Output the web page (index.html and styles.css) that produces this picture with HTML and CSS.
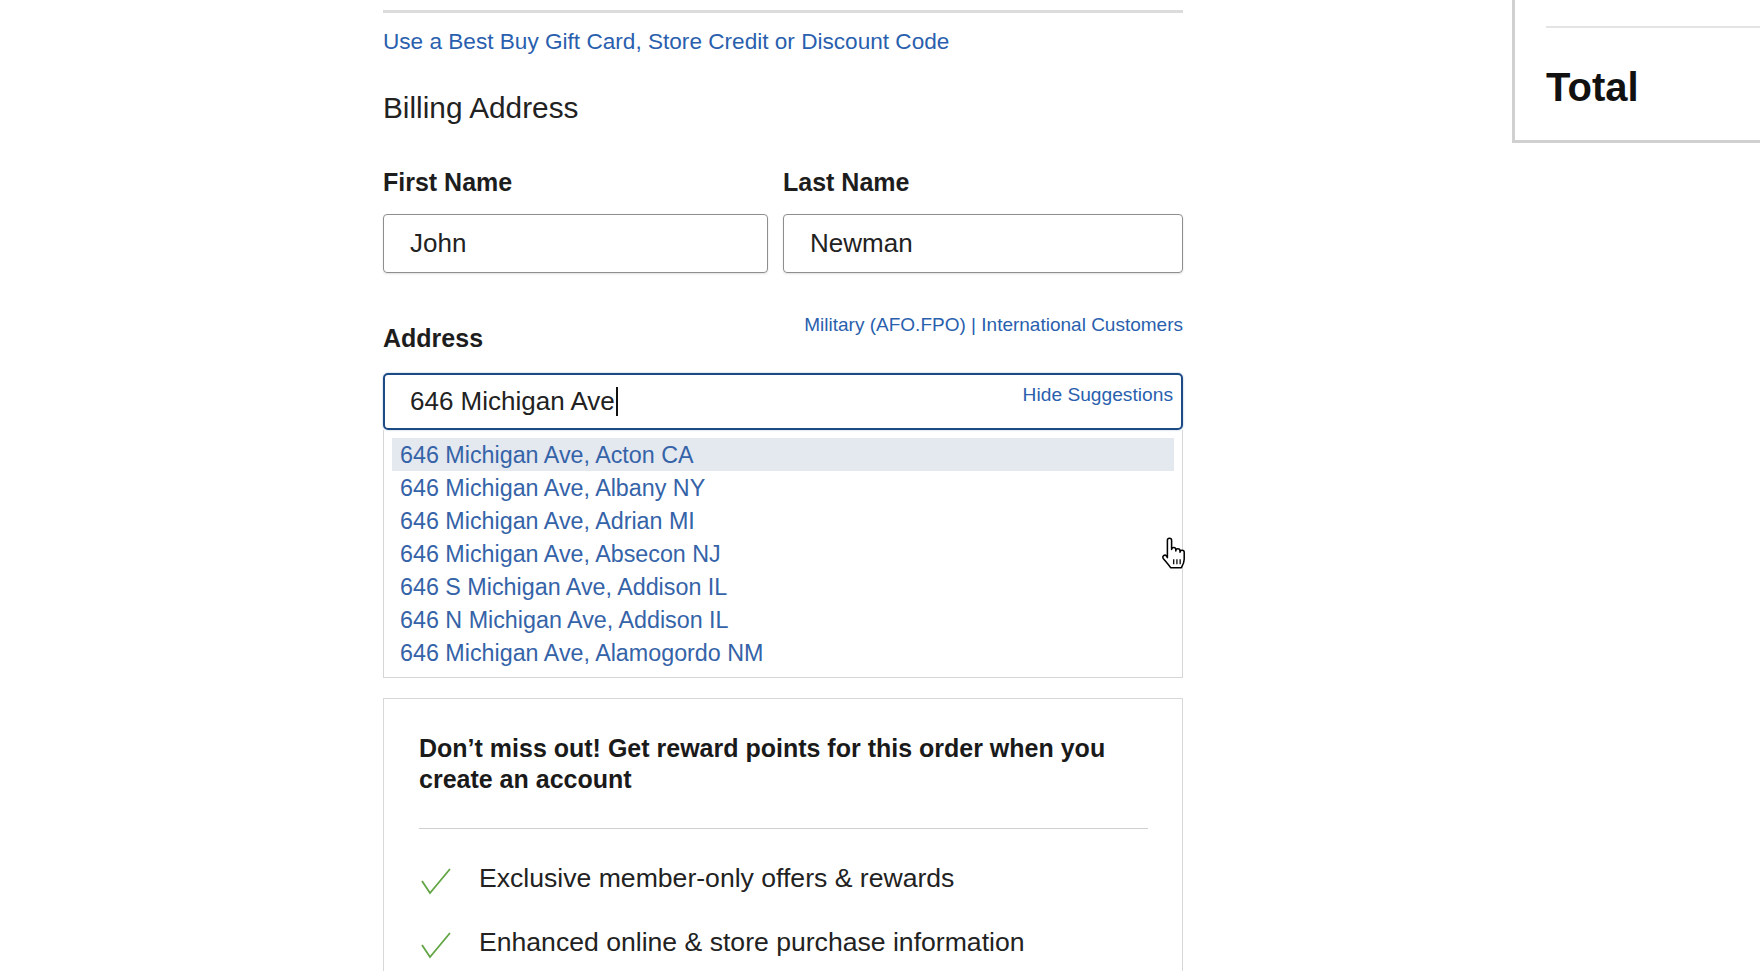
FILE: index.html
```html
<!DOCTYPE html>
<html lang="en">
<head>
<meta charset="utf-8">
<title>Billing Address</title>
<link rel="stylesheet" href="styles.css">
</head>
<body>
<div class="page">
  <main class="form-col">
    <div class="top-rule"></div>
    <a class="gift-link" href="#">Use a Best Buy Gift Card, Store Credit or Discount Code</a>
    <h2 class="section-title">Billing Address</h2>

    <div class="name-grid">
      <div class="field">
        <label class="field-label">First Name</label>
        <div class="input">John</div>
      </div>
      <div class="field">
        <label class="field-label">Last Name</label>
        <div class="input">Newman</div>
      </div>
    </div>

    <div class="address-head">
      <label class="field-label address-label">Address</label>
      <div class="alt-links"><a href="#">Military (AFO.FPO)</a> | <a href="#">International Customers</a></div>
    </div>

    <div class="address-wrap">
      <div class="input input-focus">
        <span class="typed">646 Michigan Ave<span class="caret"></span></span>
        <a class="hide-link" href="#">Hide Suggestions</a>
      </div>
      <ul class="suggestions">
        <li class="active">646 Michigan Ave, Acton CA</li>
        <li>646 Michigan Ave, Albany NY</li>
        <li>646 Michigan Ave, Adrian MI</li>
        <li>646 Michigan Ave, Absecon NJ</li>
        <li>646 S Michigan Ave, Addison IL</li>
        <li>646 N Michigan Ave, Addison IL</li>
        <li>646 Michigan Ave, Alamogordo NM</li>
      </ul>
      <svg class="hand" width="28" height="34" viewBox="0 0 20 24">
        <path d="M6 11V3a1.5 1.5 0 0 1 3 0v6.5a1.5 1.5 0 0 1 3 0v1a1.5 1.5 0 0 1 3 0v1a1.5 1.5 0 0 1 3 0v5c0 2.6-1.2 4.6-2 6H8.3c-1-1.6-3.2-4.2-5.3-6.6a1.5 1.5 0 0 1 2.3-1.9L6 15.3Z" fill="#fff" stroke="#000" stroke-width="1.1" stroke-linejoin="round"/>
        <path d="M10.5 16.5v3.5M12.8 16.5v3.5M15.1 16.5v3.5" stroke="#000" stroke-width="0.9"/>
      </svg>
    </div>

    <section class="reward-card">
      <h3 class="reward-title">Don’t miss out! Get reward points for this order when you create an account</h3>
      <div class="reward-rule"></div>
      <ul class="benefits">
        <li><svg class="check" width="34" height="30" viewBox="0 0 34 30"><path d="M3 15 L11 27 L31 3" fill="none" stroke="#62a544" stroke-width="1.8"/></svg><span>Exclusive member-only offers &amp; rewards</span></li>
        <li><svg class="check" width="34" height="30" viewBox="0 0 34 30"><path d="M3 15 L11 27 L31 3" fill="none" stroke="#62a544" stroke-width="1.8"/></svg><span>Enhanced online &amp; store purchase information</span></li>
      </ul>
    </section>
  </main>

  <aside class="summary">
    <div class="summary-rule"></div>
    <div class="summary-total">Total</div>
  </aside>
</div>
</body>
</html>
```

FILE: styles.css
```css
html, body {
  margin: 0;
  padding: 0;
  background: #fff;
  overflow: hidden;
}
body {
  font-family: "Liberation Sans", Arial, sans-serif;
  color: #1d1d1f;
  width: 1760px;
  height: 971px;
}
a { text-decoration: none; color: #2a5fae; }

.page {
  display: flex;
  align-items: flex-start;
}

.form-col {
  margin-left: 383px;
  width: 800px;
  flex-shrink: 0;
  padding-top: 10px;
  display: flex;
  flex-direction: column;
}

.top-rule {
  height: 3px;
  background: #dcdcdc;
}

.gift-link {
  margin-top: 16px;
  font-size: 22.6px;
  line-height: 26px;
  align-self: flex-start;
}

.section-title {
  margin: 36px 0 0;
  font-size: 29.8px;
  line-height: 34px;
  font-weight: normal;
  color: #222;
}

.name-grid {
  margin-top: 42px;
  display: grid;
  grid-template-columns: 385px 1fr;
  column-gap: 15px;
}
.field {
  display: flex;
  flex-direction: column;
}
.field-label {
  font-size: 25px;
  line-height: 30px;
  font-weight: bold;
  color: #1d1d1d;
}
.input {
  margin-top: 17px;
  height: 59px;
  box-sizing: border-box;
  border: 1px solid #8e8e8e;
  border-radius: 4px;
  box-shadow: 0 1px 2px rgba(0,0,0,0.12);
  padding: 0 0 0 26px;
  font-size: 26px;
  display: flex;
  align-items: center;
  color: #222;
}

.address-head {
  margin-top: 41px;
  display: flex;
  justify-content: space-between;
  align-items: flex-start;
}
.address-label { margin-top: 9px; }
.alt-links {
  font-size: 19px;
  line-height: 22px;
  color: #2a5fae;
}

.address-wrap {
  position: relative;
  margin-top: 20px;
  display: flex;
  flex-direction: column;
}
.input-focus {
  margin-top: 0;
  height: 57px;
  border: 2px solid #1c4a85;
  border-radius: 5px;
  padding-left: 25px;
  padding-right: 8px;
  justify-content: space-between;
  box-shadow: 0 0 2px rgba(28,74,133,0.4);
}
.typed {
  display: flex;
  align-items: center;
  font-size: 26px;
}
.caret {
  display: inline-block;
  width: 2px;
  height: 29px;
  background: #111;
  margin-left: 1px;
}
.hide-link {
  font-size: 19.2px;
  margin-bottom: 13px;
}

.suggestions {
  list-style: none;
  margin: 0;
  padding: 8px 8px 9px;
  border: 1px solid #d6d6d6;
  border-top: none;
  height: 248px;
  box-sizing: border-box;
}
.suggestions li {
  height: 33px;
  line-height: 34px;
  padding-left: 8px;
  font-size: 23.3px;
  color: #3563a8;
}
.suggestions li.active {
  background: #e4e8ef;
}

.hand {
  position: absolute;
  left: 776px;
  top: 163px;
}

.reward-card {
  margin-top: 20px;
  border: 1px solid #d8d8d8;
  padding: 34px 34px 40px 35px;
}
.reward-title {
  margin: 0;
  font-size: 25px;
  line-height: 31px;
  font-weight: bold;
  color: #1a1a1a;
  max-width: 700px;
}
.reward-rule {
  margin-top: 33px;
  height: 1px;
  background: #cfcfcf;
}
.benefits {
  list-style: none;
  margin: 33px 0 0;
  padding: 0;
  display: flex;
  flex-direction: column;
  gap: 32px;
}
.benefits li {
  display: flex;
  align-items: center;
  height: 32px;
  font-size: 26.6px;
  color: #222;
}
.check {
  flex-shrink: 0;
  margin-right: 26px;
  margin-top: 6px;
}

.summary {
  margin-left: 329px;
  width: 260px;
  height: 143px;
  box-sizing: border-box;
  flex-shrink: 0;
  border-left: 3px solid #d0d0d0;
  border-bottom: 3px solid #d0d0d0;
  padding-top: 26px;
  padding-left: 31px;
}
.summary-rule {
  height: 2px;
  background: #e4e4e4;
}
.summary-total {
  margin-top: 36px;
  font-size: 40px;
  line-height: 46px;
  font-weight: bold;
  color: #111;
}
```
